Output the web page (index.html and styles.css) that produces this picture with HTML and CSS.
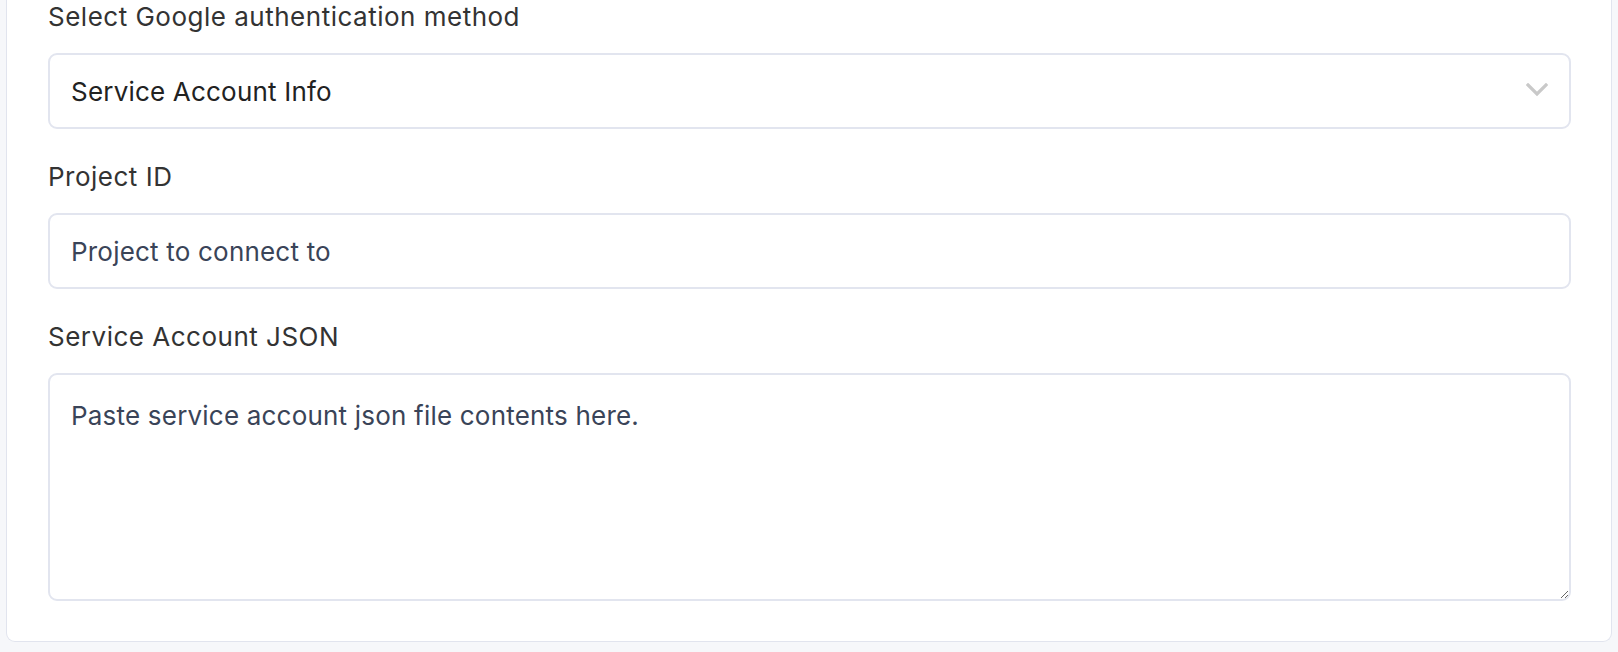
FILE: index.html
```html
<!DOCTYPE html>
<html lang="en">
<head>
    <meta charset="UTF-8">
    <meta name="viewport" content="width=device-width, initial-scale=1.0">
    <title>Google Connection</title>
    <link rel="stylesheet" href="styles.css">
</head>
<body>
    <div class="card">
        <form class="conn-form">
            <div class="field">
                <label for="auth-method">Select Google authentication method</label>
                <div class="select-wrap">
                    <select id="auth-method" name="auth-method">
                        <option>Service Account Info</option>
                        <option>Service Account File</option>
                        <option>Application Default Credentials</option>
                    </select>
                    <svg class="chevron" width="22" height="14" viewBox="0 0 22 14">
                        <path d="M2 2 L11 11 L20 2" fill="none" stroke="#c9c9c9" stroke-width="3.2" stroke-linecap="square"/>
                    </svg>
                </div>
            </div>

            <div class="field">
                <label for="project-id">Project ID</label>
                <input type="text" id="project-id" name="project-id" placeholder="Project to connect to">
            </div>

            <div class="field last">
                <label for="sa-json">Service Account JSON</label>
                <textarea id="sa-json" name="sa-json" placeholder="Paste service account json file contents here."></textarea>
            </div>
        </form>
    </div>
</body>
</html>
```

FILE: styles.css
```css
body {
    margin: 0;
    background-color: #f6f7fa;
    font-family: Inter, "Noto Sans", sans-serif;
}

.card {
    margin: 0 6px 10px 6px;
    padding: 0 40px 40px 41px;
    background-color: #fff;
    border: 1px solid #e1e4ee;
    border-top: none;
    border-radius: 0 0 9px 9px;
}

.field {
    margin-bottom: 31px;
}

.field.last {
    margin-bottom: 0;
}

.field label {
    display: block;
    font-size: 26px;
    line-height: 33px;
    letter-spacing: 0.5px;
    color: #333;
    margin-bottom: 20px;
}

.select-wrap {
    position: relative;
}

.field select,
.field input,
.field textarea {
    display: block;
    box-sizing: border-box;
    width: 100%;
    margin: 0;
    padding: 0 21px;
    font-family: Inter, "Noto Sans", sans-serif;
    font-size: 26px;
    letter-spacing: 0.2px;
    background-color: #fff;
    border: 2px solid #e2e5ef;
    border-radius: 9px;
    outline: none;
}

.field select {
    height: 76px;
    color: #222;
    appearance: none;
    -webkit-appearance: none;
}

.chevron {
    position: absolute;
    right: 23px;
    top: 30px;
    pointer-events: none;
}

.field input {
    height: 76px;
    color: #374155;
}

.field textarea {
    height: 228px;
    padding-top: 24px;
    line-height: 34px;
    color: #374155;
    resize: vertical;
}

.field input::placeholder,
.field textarea::placeholder {
    color: #3a4458;
    opacity: 1;
}
```
